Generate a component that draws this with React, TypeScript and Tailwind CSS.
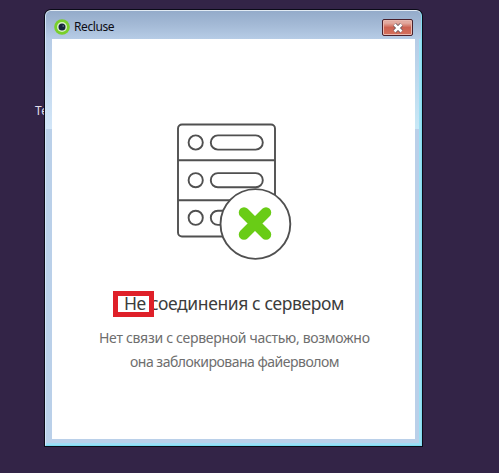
function TitleBar() {
  return (
    <header className="-mx-[6px] flex h-[28px] shrink-0 items-start justify-between rounded-t-[5px] bg-linear-to-b from-[#94abca] via-[#a4bad6] to-[#b6cce6] pl-[8px] pr-[8px]">
      <div className="flex items-center gap-[4px] pt-[8px]">
        <svg width="16" height="16" viewBox="0 0 16 16">
          <circle cx="8" cy="8" r="7.8" fill="#79cf2b" />
          <circle cx="8" cy="8" r="5" fill="#d9efcb" />
          <circle cx="8" cy="8" r="3.5" fill="#17263b" />
          <circle cx="9.2" cy="7" r="0.8" fill="#70839a" />
        </svg>
        <span className="text-[12px] leading-[16px] tracking-[-0.4px] text-[#0c0c14]">Recluse</span>
      </div>
      <button
        aria-label="Close"
        className="mt-[8px] flex h-[17px] w-[31px] items-center justify-center rounded-[2px] border border-[#49202b] bg-linear-to-b from-[#e2aaa0] from-20% via-[#cb6252] via-50% to-[#d5705c] shadow-[inset_0_0_0_1px_#e9b9b0]"
      >
        <svg width="12" height="10" viewBox="0 0 12 10">
          <path d="M2.5 1.5 9.5 8.5M9.5 1.5 2.5 8.5" stroke="#60525a" strokeWidth="4" />
          <path d="M2.5 1.5 9.5 8.5M9.5 1.5 2.5 8.5" stroke="#fff" strokeWidth="2.6" />
        </svg>
      </button>
    </header>
  );
}

function ServerIcon() {
  return (
    <svg className="ml-[125px] block shrink-0" width="116" height="138" viewBox="0 0 116 138" fill="none" stroke="#505050" strokeWidth="1.9">
      <rect x="1" y="1.5" width="97" height="112" rx="4" />
      <path d="M1 37.3H98M1 77.3H98" />
      {[19.5, 57.2, 94.8].map((y) => (
        <g key={y}>
          <circle cx="18.7" cy={y} r="7.1" />
          <rect x="33.8" y={y - 7.1} width="52" height="14.2" rx="7.1" />
        </g>
      ))}
      <circle cx="78.4" cy="101" r="34.9" fill="#fff" />
      <path d="M67 89.5 89 111.5M89 89.5 67 111.5" stroke="#69cc16" strokeWidth="10.5" strokeLinecap="round" />
    </svg>
  );
}

export default function App() {
  return (
    <div className="h-[473px] w-[499px] overflow-hidden bg-[#332447] pl-[45px] pt-[10px] font-['Noto_Sans',sans-serif]">
      <div className="relative h-[436px] w-[377px]">
        <span className="absolute -left-[10px] top-[93px] text-[12px] leading-[16px] text-[#e3dfeb]">Те</span>
        <section className="relative flex h-[436px] w-[377px] flex-col rounded-t-[6px] border border-t-[#e2ebf4] border-r-[#82dbef] border-b-[#7bdbf1] border-l-[#d2e5f8] bg-[#bad0e9] px-[6px] pb-[6px] shadow-[0_0_0_1px_#0b0b18]">
          <div className="absolute left-0 top-[28px] h-[90px] w-[6px] bg-linear-to-b from-[#b6cce6] to-[#d2e6f8]" />
          <div className="absolute right-0 top-[28px] h-[90px] w-[6px] bg-linear-to-b from-[#b6cce6] to-[#c8e8f6]" />
          <TitleBar />
          <div className="absolute right-0 top-[28px] bottom-0 w-[2px] bg-[#9cdff3]" />
          <div className="absolute bottom-0 left-0 right-0 h-[2px] bg-[#9eddf5]" />
          <main className="relative flex min-h-0 flex-1 flex-col bg-white pt-[84px]">
            <ServerIcon />
            <h1 className="mt-[30px] ml-[72px] whitespace-nowrap text-[17.5px] leading-[24px] tracking-[-0.4px] text-[#3c3c3c]">
              Не соединения с сервером
            </h1>
            <p className="mt-[11px] flex flex-col text-[14px] leading-[24px] tracking-[-0.3px] text-[#6e6e6e]">
              <span className="ml-[47px] whitespace-nowrap">Нет связи с серверной частью, возможно</span>
              <span className="ml-[78px] whitespace-nowrap tracking-[-0.5px]">она заблокирована файерволом</span>
            </p>
            <div className="absolute left-[61px] top-[252px] h-[26px] w-[41px] border-[5px] border-[#df2029]" />
          </main>
        </section>
      </div>
    </div>
  );
}
